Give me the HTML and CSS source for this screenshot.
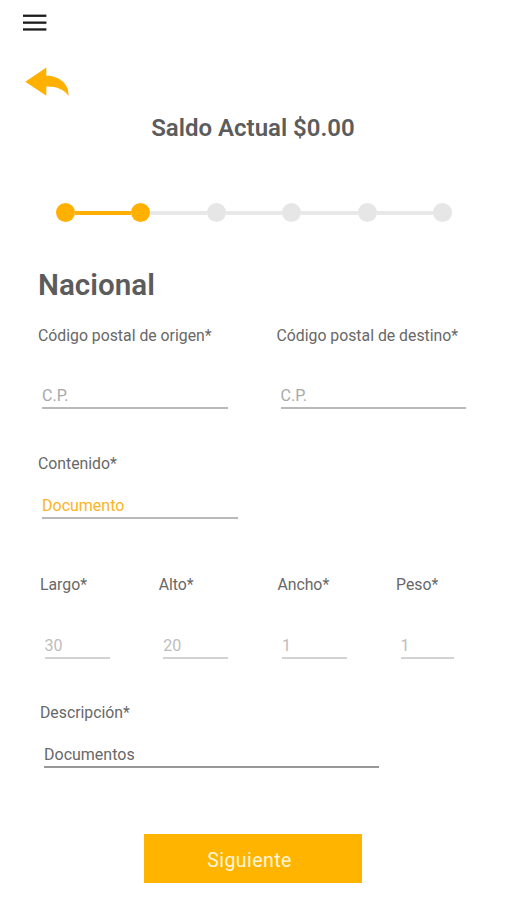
FILE: index.html
```html
<!DOCTYPE html>
<html lang="es">
<head>
  <meta charset="UTF-8">
  <meta name="viewport" content="width=device-width, initial-scale=1.0">
  <title>Nacional</title>
  <link rel="stylesheet" href="styles.css">
</head>
<body>
  <header class="top-bar">
    <button type="button" class="icon-button menu-button" aria-label="Menú">
      <svg width="24" height="18" viewBox="0 0 24 18" fill="#1c1c1c">
        <rect x="0" y="0.6" width="23.4" height="2.3"/>
        <rect x="0" y="7.5" width="23.4" height="2.3"/>
        <rect x="0" y="14.3" width="23.4" height="2.3"/>
      </svg>
    </button>
    <button type="button" class="icon-button back-button" aria-label="Regresar">
      <svg width="45" height="30" viewBox="0 0 45 30" fill="#ffb000">
        <path d="M0.3 14.7 L21.3 0.6 V8.8 C34 8.8 44 16.5 43.6 28.7 C39 22.5 32 19.2 21.3 19.4 V28.7 Z"/>
      </svg>
    </button>
  </header>
  <h1 class="balance">Saldo Actual $0.00</h1>
  <ol class="steps">
    <li class="step done"></li>
    <li class="step done"></li>
    <li class="step"></li>
    <li class="step"></li>
    <li class="step"></li>
    <li class="step"></li>
  </ol>
  <form class="quote-form">
    <h2>Nacional</h2>
    <div class="row postal-row">
      <div class="form-group">
        <label for="origen">Código postal de origen*</label>
        <input type="text" id="origen" name="origen" placeholder="C.P.">
      </div>
      <div class="form-group">
        <label for="destino">Código postal de destino*</label>
        <input type="text" id="destino" name="destino" placeholder="C.P.">
      </div>
    </div>
    <div class="form-group content-group">
      <label for="contenido">Contenido*</label>
      <input type="text" id="contenido" name="contenido" value="Documento">
    </div>
    <div class="row size-row">
      <div class="form-group">
        <label for="largo">Largo*</label>
        <input type="text" id="largo" name="largo" placeholder="30">
      </div>
      <div class="form-group">
        <label for="alto">Alto*</label>
        <input type="text" id="alto" name="alto" placeholder="20">
      </div>
      <div class="form-group">
        <label for="ancho">Ancho*</label>
        <input type="text" id="ancho" name="ancho" placeholder="1">
      </div>
      <div class="form-group weight-group">
        <label for="peso">Peso*</label>
        <input type="text" id="peso" name="peso" placeholder="1">
      </div>
    </div>
    <div class="form-group description-group">
      <label for="descripcion">Descripción*</label>
      <input type="text" id="descripcion" name="descripcion" value="Documentos">
    </div>
    <button type="submit" class="next-button">Siguiente</button>
  </form>
</body>
</html>
```

FILE: styles.css
```css
* {
  box-sizing: border-box;
}

body {
  font-family: Roboto, sans-serif;
  font-size: 16px;
  line-height: 20px;
  background: #fff;
  color: #5c5c5c;
  margin: 0;
}

.top-bar {
  display: flex;
  flex-direction: column;
  align-items: flex-start;
  padding: 14px 0 0 23px;
}

.icon-button {
  border: none;
  background: none;
  padding: 0;
  cursor: pointer;
}

.icon-button svg {
  display: block;
}

.back-button {
  margin: 35px 0 0 2px;
}

.balance {
  margin: 16px 0 0;
  font-size: 24px;
  font-weight: 600;
  line-height: 30px;
  text-align: center;
}

/* Progress steps */
.steps {
  display: flex;
  justify-content: space-between;
  list-style: none;
  width: 396px;
  margin: 60px 0 0 56px;
  padding: 0;
}

.step {
  display: flex;
  align-items: center;
  flex: 1;
}

.step:last-child {
  flex: none;
}

.step::before {
  content: "";
  width: 19px;
  height: 19px;
  border-radius: 50%;
  background: #e6e6e6;
}

.step::after {
  content: "";
  flex: 1;
  height: 4px;
  background: #e8e8e8;
}

.step:last-child::after {
  display: none;
}

.step.done::before,
.step.done:first-child::after {
  background: #ffb000;
}

/* Form */
.quote-form {
  padding: 0 38px;
}

.quote-form h2 {
  margin: 45px 0 0;
  font-size: 29.6px;
  font-weight: 600;
  line-height: 36px;
}

.row {
  display: flex;
}

.form-group {
  display: flex;
  flex-direction: column;
}

.form-group label {
  height: 20px;
  padding-top: 1px;
  font-size: 15.8px;
  color: #686868;
}

.form-group input {
  width: 100%;
  height: 27px;
  padding: 1px 0 0;
  border: none;
  border-bottom: 2px solid #b9b9b9;
  border-radius: 0;
  outline: none;
  background: none;
  color: #686868;
  font: inherit;
}

.form-group input::placeholder {
  color: #a8a8a8;
  opacity: 1;
}

.postal-row {
  gap: 53px;
  margin: 22px 0 0;
}

.postal-row .form-group {
  width: 185.5px;
}

.postal-row label {
  white-space: nowrap;
}

.postal-row input {
  margin: 37px 0 0 4px;
}

.content-group {
  width: 196px;
  margin-top: 44px;
}

.content-group input {
  margin: 19px 0 0 4px;
  color: #fbb426;
}

.size-row {
  gap: 53.7px;
  margin: 55px 0 0 2px;
}

.size-row .form-group {
  width: 65px;
}

.size-row .weight-group {
  width: 53px;
}

.size-row input {
  margin: 38px 0 0 4.5px;
  border-bottom-color: #d2d2d2;
}

.size-row input::placeholder {
  color: #bdbdbd;
}

.description-group {
  width: 335px;
  margin: 43px 0 0 2px;
}

.description-group input {
  margin: 19px 0 0 4px;
  border-bottom-color: #989898;
}

.next-button {
  display: block;
  width: 218px;
  height: 49px;
  margin: 66px 0 0 106px;
  padding: 4px 7px 0 0;
  border: none;
  background: #ffb500;
  color: #fff6da;
  font-family: inherit;
  font-size: 19.5px;
  letter-spacing: 0.45px;
  cursor: pointer;
}
```
